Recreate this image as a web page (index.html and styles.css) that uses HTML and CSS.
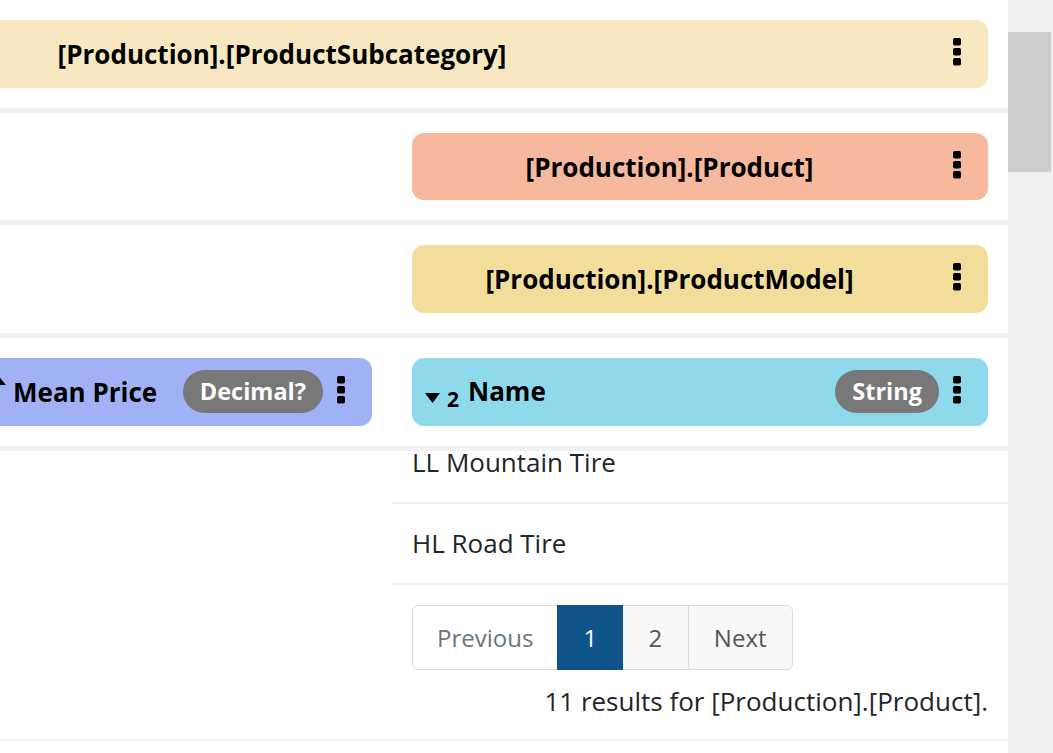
FILE: index.html
```html
<!DOCTYPE html>
<html lang="en">
<head>
<meta charset="utf-8">
<title>Query results</title>
<link rel="stylesheet" href="styles.css">
</head>
<body>
<div class="app">
  <main class="viewport">
    <div class="canvas">
      <section class="heads">
        <div class="level">
          <div class="bar bar--table bar--subcat span-all">
            <span class="bar__title">[Production].[ProductSubcategory]</span>
            <button class="kebab" aria-label="More"><svg viewBox="0 0 8 28" width="8" height="28"><rect x="0" y="0" width="8" height="7.5" rx="1.8"/><rect x="0" y="10" width="8" height="7.5" rx="1.8"/><rect x="0" y="20" width="8" height="7.5" rx="1.8"/></svg></button>
          </div>
        </div>
        <div class="level">
          <div class="bar bar--table bar--product col-c">
            <span class="bar__title">[Production].[Product]</span>
            <button class="kebab" aria-label="More"><svg viewBox="0 0 8 28" width="8" height="28"><rect x="0" y="0" width="8" height="7.5" rx="1.8"/><rect x="0" y="10" width="8" height="7.5" rx="1.8"/><rect x="0" y="20" width="8" height="7.5" rx="1.8"/></svg></button>
          </div>
        </div>
        <div class="level">
          <div class="bar bar--table bar--model col-c">
            <span class="bar__title">[Production].[ProductModel]</span>
            <button class="kebab" aria-label="More"><svg viewBox="0 0 8 28" width="8" height="28"><rect x="0" y="0" width="8" height="7.5" rx="1.8"/><rect x="0" y="10" width="8" height="7.5" rx="1.8"/><rect x="0" y="20" width="8" height="7.5" rx="1.8"/></svg></button>
          </div>
        </div>
        <div class="level">
          <div class="bar bar--column bar--mean col-b">
            <span class="col-title"><svg class="sort-up" viewBox="0 0 15 9" width="15" height="9"><polygon points="0,9 7.5,0 15,9"/></svg>Mean Price</span>
            <span class="badge">Decimal?</span>
            <button class="kebab" aria-label="More"><svg viewBox="0 0 8 28" width="8" height="28"><rect x="0" y="0" width="8" height="7.5" rx="1.8"/><rect x="0" y="10" width="8" height="7.5" rx="1.8"/><rect x="0" y="20" width="8" height="7.5" rx="1.8"/></svg></button>
          </div>
          <div class="bar bar--column bar--name col-c">
            <span class="col-title"><svg class="sort-down" viewBox="0 0 15 10" width="15" height="10"><polygon points="0,0 15,0 7.5,10"/></svg><sub class="rank">2</sub>Name</span>
            <span class="badge">String</span>
            <button class="kebab" aria-label="More"><svg viewBox="0 0 8 28" width="8" height="28"><rect x="0" y="0" width="8" height="7.5" rx="1.8"/><rect x="0" y="10" width="8" height="7.5" rx="1.8"/><rect x="0" y="20" width="8" height="7.5" rx="1.8"/></svg></button>
          </div>
        </div>
      </section>
      <section class="results">
        <div class="results__col col-c">
          <table class="rows">
            <tbody>
              <tr><td>LL Mountain Tire</td></tr>
              <tr><td>HL Road Tire</td></tr>
            </tbody>
          </table>
          <nav class="pager" aria-label="Pages">
            <a class="pager__item pager__item--prev" href="#">Previous</a>
            <a class="pager__item pager__item--active" href="#">1</a>
            <a class="pager__item pager__item--alt" href="#">2</a>
            <a class="pager__item pager__item--alt pager__item--next" href="#">Next</a>
          </nav>
          <p class="count">11 results for [Production].[Product].</p>
        </div>
      </section>
    </div>
  </main>
  <div class="scrollbar"><div class="scrollbar__thumb"></div></div>
</div>
</body>
</html>
```

FILE: styles.css
```css
* { box-sizing: border-box; }

html, body {
  margin: 0;
  padding: 0;
  height: 100%;
  background: #fff;
}

body {
  font-family: "Open Sans", "Noto Sans", sans-serif;
  font-size: 26px;
  line-height: 36px;
  color: #212529;
  overflow: hidden;
}

.app {
  display: flex;
  height: 100vh;
}

.viewport {
  width: 1008px;
  flex: none;
  overflow: hidden;
}

.canvas {
  width: 1391px;
  margin-left: -383px;
}

.heads {
  position: relative;
  z-index: 1;
  background: #fff;
}

.level,
.results {
  display: grid;
  grid-template-columns: 301px 394px 576px;
  column-gap: 40px;
  padding: 20px;
}

.level {
  border-bottom: 5px solid #f2f2f2;
}

.span-all { grid-column: 1 / -1; }
.col-b { grid-column: 2; }
.col-c { grid-column: 3; }

.bar {
  height: 67.7px;
  display: flex;
  align-items: center;
  padding: 0 27px 0 13px;
  border-radius: 12px;
  font-weight: 700;
  font-size: 26px;
  color: #000;
  white-space: nowrap;
}

.bar--subcat { background: #f7e8c2; }
.bar--product { background: #f6b99e; }
.bar--model { background: #f2dd9b; }
.bar--mean { background: #a0b2f5; }
.bar--name { background: #8edaec; }

.bar__title {
  flex: 1;
  text-align: center;
}

.kebab {
  flex: none;
  width: 8px;
  height: 28px;
  padding: 0;
  border: 0;
  background: none;
  margin-bottom: 4px;
  display: flex;
}

.kebab svg { fill: #000; }

.bar--table .kebab { margin-left: 39px; }

.col-title {
  flex: 1;
}

.sort-up {
  fill: #000;
  vertical-align: 17px;
  margin-right: 7px;
}

.sort-down {
  fill: #000;
  vertical-align: -2px;
}

.rank {
  font-size: 21px;
  vertical-align: -6px;
  margin: 0 9px 0 7px;
  line-height: 1;
}

.badge {
  flex: none;
  height: 43px;
  line-height: 43px;
  padding: 0 17px;
  border-radius: 22px;
  background: #787878;
  color: #fff;
  font-size: 23.5px;
  font-weight: 700;
  margin-right: 14px;
}

.results {
  margin-top: -28px;
  padding-top: 0;
  border-bottom: 2px solid #f2f2f2;
}

.results__col {
  display: flex;
  flex-direction: column;
}

.rows {
  border-collapse: collapse;
  margin: 0 -20px;
  width: calc(100% + 40px);
}

.rows td {
  padding: 21.5px 20px;
  border-bottom: 2px solid #f2f2f2;
  line-height: 36px;
}

.pager {
  display: flex;
  align-self: flex-start;
  margin-top: 20px;
  font-size: 24px;
}

.pager__item {
  display: block;
  padding: 14px 24px;
  line-height: 35px;
  border: 1px solid #dcdcdc;
  margin-left: -1px;
  text-decoration: none;
  color: #555;
  background: #fff;
}

.pager__item--prev {
  margin-left: 0;
  color: #6c757d;
  border-radius: 6px 0 0 6px;
}

.pager__item--active {
  background: #0e5489;
  border-color: #0e5489;
  color: #fff;
  position: relative;
  padding: 14px 25px;
}

.pager__item--alt {
  background: #f8f8f8;
  padding: 14px 25.5px;
}

.pager__item--next {
  border-radius: 0 6px 6px 0;
  padding: 14px 25px;
}

.count {
  margin: 13px 0 0;
  text-align: right;
  line-height: 36px;
}

.scrollbar {
  width: 45px;
  flex: none;
  background: #f0f0f0;
}

.scrollbar__thumb {
  margin-top: 32px;
  width: 43px;
  height: 140px;
  background: #cdcdcd;
}
```
